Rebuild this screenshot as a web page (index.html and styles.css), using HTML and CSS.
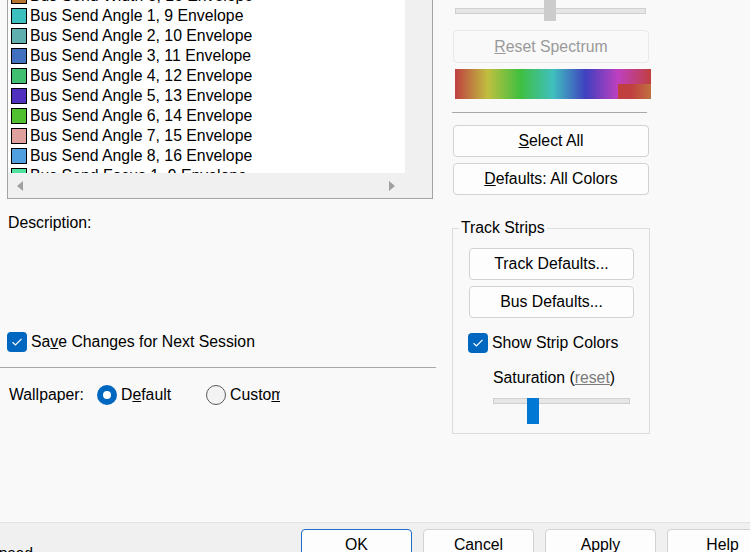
FILE: index.html
```html
<!DOCTYPE html>
<html lang="en">
<head>
    <meta charset="UTF-8">
    <meta name="viewport" content="width=device-width, initial-scale=1.0">
    <title>Colors</title>
    <link rel="stylesheet" href="styles.css">
</head>
<body>
    <div class="dialog">
        <div class="main">
            <!-- Left side: color list and options -->
            <div class="left-col">
                <div class="listbox">
                    <div class="list-view">
                        <ul class="color-list">
                            <li><span class="swatch" style="background:#b8732f"></span>Bus Send Width 8, 16 Envelope</li>
                            <li><span class="swatch" style="background:#3cbfbf"></span>Bus Send Angle 1, 9 Envelope</li>
                            <li><span class="swatch" style="background:#60afaf"></span>Bus Send Angle 2, 10 Envelope</li>
                            <li><span class="swatch" style="background:#4070bf"></span>Bus Send Angle 3, 11 Envelope</li>
                            <li><span class="swatch" style="background:#40bf70"></span>Bus Send Angle 4, 12 Envelope</li>
                            <li><span class="swatch" style="background:#5030bf"></span>Bus Send Angle 5, 13 Envelope</li>
                            <li><span class="swatch" style="background:#50bf30"></span>Bus Send Angle 6, 14 Envelope</li>
                            <li><span class="swatch" style="background:#e09f9f"></span>Bus Send Angle 7, 15 Envelope</li>
                            <li><span class="swatch" style="background:#50a0e0"></span>Bus Send Angle 8, 16 Envelope</li>
                            <li><span class="swatch" style="background:#50e0a0"></span>Bus Send Focus 1, 9 Envelope</li>
                        </ul>
                    </div>
                    <div class="vscroll"></div>
                    <div class="hscroll">
                        <span class="arrow-left"></span>
                        <span class="arrow-right"></span>
                    </div>
                    <div class="corner"></div>
                </div>

                <p class="description">Description:</p>

                <label class="check-row save-row">
                    <span class="checkbox">
                        <svg width="12" height="10" viewBox="0 0 12 10"><path d="M1.5 5.2 L4.5 8 L10.5 1.8" fill="none" stroke="#fff" stroke-width="1.2"/></svg>
                    </span>
                    Sa<u>v</u>e Changes for Next Session
                </label>

                <hr class="left-sep">

                <div class="wallpaper-row">
                    <span class="wp-label">Wallpaper:</span>
                    <label class="radio-item">
                        <span class="radio checked"></span>D<u>e</u>fault
                    </label>
                    <label class="radio-item custom">
                        <span class="radio"></span><span class="clip">Custo<u>m</u></span>
                    </label>
                </div>
            </div>

            <!-- Right side: spectrum and track strips -->
            <div class="right-col">
                <div class="slider top-slider">
                    <div class="track"></div>
                    <div class="thumb gray-thumb"></div>
                </div>

                <button class="btn disabled reset-btn"><u>R</u>eset Spectrum</button>

                <div class="spectrum">
                    <div class="spectrum-patch"></div>
                </div>

                <hr class="right-sep">

                <button class="btn select-btn"><u>S</u>elect All</button>
                <button class="btn defaults-btn"><u>D</u>efaults: All Colors</button>

                <fieldset class="group">
                    <legend>Track Strips</legend>
                    <button class="btn group-btn">Track Defaults...</button>
                    <button class="btn group-btn bus-btn">Bus Defaults...</button>

                    <label class="check-row strip-row">
                        <span class="checkbox">
                            <svg width="12" height="10" viewBox="0 0 12 10"><path d="M1.5 5.2 L4.5 8 L10.5 1.8" fill="none" stroke="#fff" stroke-width="1.2"/></svg>
                        </span>
                        Show Strip Colors
                    </label>

                    <p class="saturation">Saturation (<span class="reset-link">reset</span>)</p>

                    <div class="slider sat-slider">
                        <div class="track"></div>
                        <div class="thumb blue-thumb"></div>
                    </div>
                </fieldset>
            </div>
        </div>

        <div class="footer">
            <span class="footer-note"><span>Collapsed</span></span>
            <div class="footer-buttons">
                <button class="btn foot-btn ok-btn">OK</button>
                <button class="btn foot-btn">Cancel</button>
                <button class="btn foot-btn">Apply</button>
                <button class="btn foot-btn">Help</button>
            </div>
        </div>
    </div>
</body>
</html>
```

FILE: styles.css
```css
/* General */
html, body {
    margin: 0;
    padding: 0;
}

body {
    width: 750px;
    height: 552px;
    overflow: hidden;
    background-color: #f9f9f9;
    font-family: "Liberation Sans", Arial, sans-serif;
    font-size: 15.8px;
    line-height: 20px;
    color: #000;
}

.dialog {
    display: flex;
    flex-direction: column;
    height: 552px;
}

.main {
    display: flex;
    height: 522px;
    flex-shrink: 0;
}

/* Left column */
.left-col {
    width: 440px;
}

.listbox {
    margin-left: 7px;
    width: 424px;
    height: 198px;
    border: 1px solid #a3a3a3;
    border-top: none;
    display: grid;
    grid-template-columns: 397px 27px;
    grid-template-rows: 173px 25px;
    background-color: #f0f0f0;
}

.list-view {
    background-color: #fff;
    overflow: hidden;
}

.color-list {
    list-style: none;
    margin: -14px 0 0 0;
    padding: 0;
}

.color-list li {
    display: flex;
    align-items: center;
    height: 20px;
    white-space: nowrap;
}

.swatch {
    width: 14px;
    height: 14px;
    border: 1px solid #000;
    margin-left: 3px;
    margin-right: 3px;
    flex-shrink: 0;
}

.vscroll, .corner {
    background-color: #f0f0f0;
}

.hscroll {
    position: relative;
    background-color: #f0f0f0;
}

.arrow-left, .arrow-right {
    position: absolute;
    top: 8px;
    width: 0;
    height: 0;
    border-top: 5px solid transparent;
    border-bottom: 5px solid transparent;
}

.arrow-left {
    left: 9px;
    border-right: 6px solid #a0a0a0;
}

.arrow-right {
    right: 10px;
    border-left: 6px solid #a0a0a0;
}

.description {
    margin: 14px 0 0 8px;
}

.check-row {
    display: flex;
    align-items: center;
}

.checkbox {
    width: 20px;
    height: 20px;
    border-radius: 4px;
    background-color: #0067c0;
    display: flex;
    align-items: center;
    justify-content: center;
    margin-right: 4px;
    flex-shrink: 0;
}

.save-row {
    margin: 99px 0 0 7px;
}

.left-sep {
    margin: 15px 0 0 0;
    width: 436px;
    border: none;
    border-top: 1px solid #a8a8a8;
}

.wallpaper-row {
    display: flex;
    align-items: center;
    margin: 17px 0 0 9px;
}

.wp-label {
    width: 88px;
}

.radio-item {
    display: flex;
    align-items: center;
}

.radio {
    width: 20px;
    height: 20px;
    box-sizing: border-box;
    border-radius: 50%;
    border: 1px solid #5a5a5a;
    background-color: #f3f3f3;
    margin-right: 4px;
}

.radio.checked {
    border: 6px solid #0067c0;
    background-color: #fff;
}

.radio-item.custom {
    margin-left: 35px;
}

.clip {
    display: inline-block;
    width: 50px;
    overflow: hidden;
    white-space: nowrap;
}

/* Right column */
.right-col {
    width: 196px;
    padding-left: 13px;
    display: flex;
    flex-direction: column;
}

.slider {
    position: relative;
}

.top-slider {
    height: 22px;
}

.track {
    background-color: #e6e6e6;
    border: 1px solid #d0d0d0;
    box-sizing: border-box;
}

.top-slider .track {
    margin: 8px 0 0 2px;
    width: 191px;
    height: 6px;
}

.thumb {
    position: absolute;
    width: 12px;
}

.gray-thumb {
    left: 91px;
    top: 0;
    height: 21px;
    background-color: #cccccc;
}

.btn {
    display: block;
    box-sizing: border-box;
    width: 196px;
    height: 32px;
    padding: 0;
    font-family: inherit;
    font-size: 15.8px;
    color: #000;
    background-color: #fdfdfd;
    border: 1px solid #d2d2d2;
    border-radius: 4px;
}

.btn.disabled {
    color: #999;
    background-color: #f9f9f9;
    border-color: #e8e8e8;
}

.reset-btn {
    margin-top: 8px;
    height: 33px;
}

.spectrum {
    position: relative;
    margin: 6px 0 0 2px;
    width: 196px;
    height: 30px;
    background: linear-gradient(to right,
        hsl(0, 50%, 50%) 0%,
        hsl(60, 50%, 50%) 16.7%,
        hsl(120, 50%, 50%) 33.3%,
        hsl(180, 50%, 50%) 50%,
        hsl(240, 50%, 50%) 66.7%,
        hsl(300, 50%, 50%) 83.3%,
        hsl(360, 50%, 50%) 100%);
}

.spectrum-patch {
    position: absolute;
    right: 0;
    bottom: 0;
    width: 33px;
    height: 15px;
    background: linear-gradient(to right, #c04040 40%, #c07040 100%);
}

.right-sep {
    margin: 13px 0 0 -1px;
    width: 195px;
    border: none;
    border-top: 1px solid #a8a8a8;
}

.select-btn {
    margin-top: 12px;
}

.defaults-btn {
    margin-top: 6px;
}

/* Track Strips group */
.group {
    margin: 23px 0 0 -1px;
    padding: 0;
    width: 198px;
    height: 216px;
    box-sizing: border-box;
    border: 1px solid #dcdcdc;
}

.group legend {
    margin-left: 6px;
    padding: 0 2px;
}

.group-btn {
    margin: 10px 0 0 16px;
    width: 165px;
}

.bus-btn {
    margin-top: 6px;
}

.strip-row {
    margin: 15px 0 0 15px;
}

.saturation {
    margin: 15px 0 0 40px;
}

.reset-link {
    color: #7a7a7a;
    text-decoration: underline;
}

.sat-slider {
    margin: 8px 0 0 40px;
    height: 26px;
}

.sat-slider .track {
    margin-top: 10px;
    width: 137px;
    height: 6px;
}

.blue-thumb {
    left: 34px;
    top: 0;
    height: 26px;
    background-color: #0078d4;
}

/* Footer */
.footer {
    flex: 1;
    display: flex;
    border-top: 1px solid #e3e3e3;
    background-color: #f0f0f0;
}

.footer-note {
    width: 33px;
    flex-shrink: 0;
    overflow: hidden;
    display: flex;
    justify-content: flex-end;
    margin-top: 21px;
    white-space: nowrap;
}

.footer-buttons {
    display: flex;
    gap: 11px;
    margin: 6px 0 0 268px;
}

.foot-btn {
    width: 111px;
    flex-shrink: 0;
}

.ok-btn {
    border-color: #1c6fc8;
}
```
